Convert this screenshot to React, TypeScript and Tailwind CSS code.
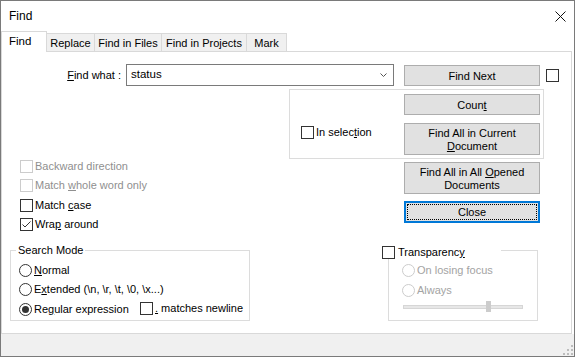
import React from 'react'

type BoxProps = {
  label: React.ReactNode
  checked?: boolean
  disabled?: boolean
  className?: string
}

function Checkbox({ label, checked, disabled, className = '' }: BoxProps) {
  return (
    <div className={`flex items-center h-[13px] ${disabled ? 'text-[#8f8f8f]' : ''} ${className}`}>
      <span
        className={`w-[13px] h-[13px] shrink-0 border bg-white ${disabled ? 'border-[#cccccc]' : 'border-[#333333]'}`}
      >
        {checked && (
          <svg width="11" height="11" viewBox="0 0 11 11" className="block">
            <polyline points="1.5,5.5 4,8 9.5,2.5" fill="none" stroke="#333" strokeWidth="1" />
          </svg>
        )}
      </span>
      <span className="ml-[2px] leading-[13px] whitespace-nowrap">{label}</span>
    </div>
  )
}

function Radio({ label, checked, disabled, className = '' }: BoxProps) {
  return (
    <div className={`flex items-center h-[13px] ${disabled ? 'text-[#a3a3a3]' : ''} ${className}`}>
      <span
        className={`w-[13px] h-[13px] shrink-0 rounded-full border bg-white flex items-center justify-center ${
          disabled ? 'border-[#cccccc]' : 'border-[#333333]'
        }`}
      >
        {checked && <span className="w-[7px] h-[7px] rounded-full bg-[#333333]" />}
      </span>
      <span className="ml-[2px] leading-[13px] whitespace-nowrap">{label}</span>
    </div>
  )
}

function Button({ children, className = '' }: { children: React.ReactNode; className?: string }) {
  return (
    <div
      className={`w-[136px] border border-[#adadad] bg-[#e1e1e1] flex items-center justify-center text-center leading-[13px] pt-[1px] ${className}`}
    >
      {children}
    </div>
  )
}

const tabs = [
  { name: 'Replace', w: 'w-[48px]' },
  { name: 'Find in Files', w: 'w-[67px]' },
  { name: 'Find in Projects', w: 'w-[85px]' },
  { name: 'Mark', w: 'w-[40px]' },
]

export default function App() {
  return (
    <div className="w-[575px] h-[357px] border border-[#7a7a7a] bg-white flex flex-col text-[11px] text-black font-['Liberation_Sans',Arial,sans-serif] overflow-hidden select-none">
      {/* Title bar */}
      <div className="h-[30px] shrink-0 flex items-center justify-between pl-[8px] pr-[8px]">
        <span className="text-[12px]">Find</span>
        <svg width="11" height="11" viewBox="0 0 11 11" aria-hidden="true">
          <path d="M0.5 0.5 L10.5 10.5 M10.5 0.5 L0.5 10.5" stroke="#111" strokeWidth="1" />
        </svg>
      </div>

      {/* Tabs */}
      <div className="h-[20px] shrink-0 flex items-end">
        <div className="relative z-10 w-[46px] h-[21px] -mb-[1px] bg-white border border-b-0 border-[#d9d9d9] pl-[7px] leading-[19px] text-[11.5px]">
          Find
        </div>
        {tabs.map(({ name, w }) => (
          <div
            key={name}
            className={`${w} h-[18px] bg-[#f0f0f0] border-t border-r border-[#d9d9d9] text-center leading-[18px] whitespace-nowrap`}
          >
            {name}
          </div>
        ))}
      </div>

      {/* Tab panel */}
      <div className="w-[571px] h-[283px] shrink-0 border border-[#d9d9d9] bg-white flex flex-col">
        {/* Find what row */}
        <div className="mt-[12px] flex items-start">
          <div className="w-[124px] h-[22px] pr-[5px] text-right leading-[22px] whitespace-nowrap">
            <u>F</u>ind what :
          </div>
          <div className="w-[268px] h-[22px] border border-[#7a7a7a] flex items-center justify-between pl-[4px] pr-[6px]">
            <span className="text-[11.5px]">status</span>
            <svg width="7" height="5" viewBox="0 0 7 5" aria-hidden="true">
              <polyline points="0.5,0.5 3.5,3.5 6.5,0.5" fill="none" stroke="#555" strokeWidth="1" />
            </svg>
          </div>
          <Button className="ml-[10px] mt-[1px] h-[21px]">Find Next</Button>
          <Checkbox label="" className="ml-[6px] mt-[5px]" />
        </div>

        {/* In selection group */}
        <div className="mt-[3px] ml-[287px] w-[255px] h-[70px] border border-[#dcdcdc] flex">
          <div className="w-[114px] pl-[11px] pt-[36px]">
            <Checkbox
              label={
                <>
                  In selec<u>t</u>ion
                </>
              }
            />
          </div>
          <div className="pt-[4px] flex flex-col gap-[8px]">
            <Button className="h-[21px]">
              <span>
                Coun<u>t</u>
              </span>
            </Button>
            <Button className="h-[32px]">
              <span>
                Find All in Current
                <br />
                <u>D</u>ocument
              </span>
            </Button>
          </div>
        </div>

        {/* Options + buttons */}
        <div className="h-[72px] flex">
          <div className="w-[402px] pl-[18px] pt-[1px] flex flex-col gap-[6px]">
            <Checkbox label="Backward direction" disabled />
            <Checkbox
              disabled
              label={
                <>
                  Match <u>w</u>hole word only
                </>
              }
            />
            <Checkbox
              className="mt-[1px]"
              label={
                <>
                  Match <u>c</u>ase
                </>
              }
            />
            <Checkbox
              checked
              label={
                <>
                  Wra<u>p</u> around
                </>
              }
            />
          </div>
          <div className="pt-[3px] flex flex-col gap-[7px]">
            <Button className="h-[32px]">
              <span>
                Find All in All <u>O</u>pened
                <br />
                Documents
              </span>
            </Button>
            <div className="w-[136px] h-[22px] border-2 border-[#0078d7] bg-[#e1e1e1] p-[1px]">
              <div className="w-full h-full border border-dotted border-black flex items-center justify-center leading-[13px] pt-[1px]">
                Close
              </div>
            </div>
          </div>
        </div>

        {/* Search mode + transparency */}
        <div className="mt-[19px] flex">
          <div className="relative ml-[8px] w-[240px] h-[71px] border border-[#dcdcdc] pl-[8px] pt-[13px] flex flex-col gap-[6px]">
            <span className="absolute left-[5px] -top-[7px] bg-white px-[2px] leading-[13px]">Search Mode</span>
            <Radio
              label={
                <>
                  <u>N</u>ormal
                </>
              }
            />
            <Radio
              label={
                <>
                  E<u>x</u>tended (\n, \r, \t, \0, \x...)
                </>
              }
            />
            <div className="mt-[1px] flex items-center">
              <Radio
                checked
                className="w-[121px]"
                label={
                  <>
                    Re<u>g</u>ular expression
                  </>
                }
              />
              <Checkbox
                className="-mt-[2px]"
                label={
                  <>
                    <u>.</u> matches newline
                  </>
                }
              />
            </div>
          </div>

          <div className="relative ml-[138px] w-[150px] h-[71px] border border-[#dcdcdc] pl-[13px] pt-[13px] flex flex-col gap-[7px]">
            <div className="absolute -left-[7px] -top-[5px] w-[119px] bg-white">
              <Checkbox
                label={
                  <>
                    Transparenc<u>y</u>
                  </>
                }
                className="[&>span:last-child]:ml-[3px]"
              />
            </div>
            <Radio label="On losing focus" disabled />
            <Radio label="Always" disabled />
            <div className="relative ml-[1px] -mt-[3px] w-[120px] h-[11px]">
              <div className="absolute left-0 right-0 top-[4px] h-[4px] bg-[#e7e7e7] border border-[#d6d6d6]" />
              <div className="absolute left-[83px] top-0 w-[5px] h-[11px] bg-[#cccccc]" />
            </div>
          </div>
        </div>
      </div>

      {/* Footer strip with size grip */}
      <div className="flex-1 bg-[#f0f0f0] flex items-end justify-end pr-[1px] pb-[1px]">
        <svg width="10" height="10" viewBox="0 0 10 10" aria-hidden="true">
          <rect x="8" y="0" width="2" height="2" fill="#bcbcbc" />
          <rect x="4" y="4" width="2" height="2" fill="#bcbcbc" />
          <rect x="8" y="4" width="2" height="2" fill="#bcbcbc" />
          <rect x="0" y="8" width="2" height="2" fill="#bcbcbc" />
          <rect x="4" y="8" width="2" height="2" fill="#bcbcbc" />
          <rect x="8" y="8" width="2" height="2" fill="#bcbcbc" />
        </svg>
      </div>
    </div>
  )
}
